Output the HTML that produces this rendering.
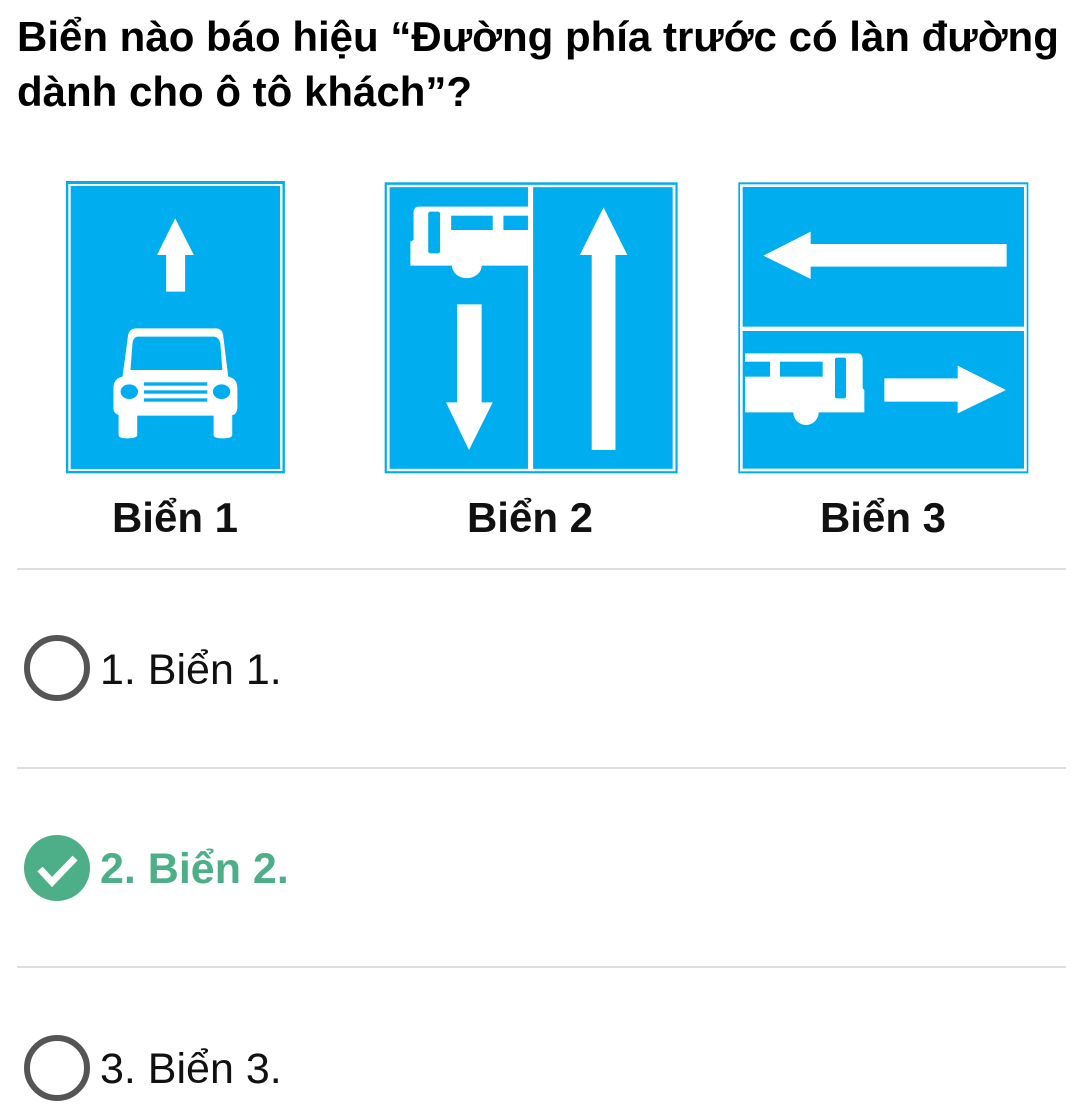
<!DOCTYPE html>
<html><head><meta charset="utf-8"><style>
body{margin:0;width:1079px;height:1110px;background:#fff;position:relative;overflow:hidden;font-family:"Liberation Sans",sans-serif;}
.t{position:absolute;left:17px;top:9px;font-weight:bold;font-size:42px;line-height:55px;color:#000;white-space:nowrap;letter-spacing:0px}
.lbl{position:absolute;top:494px;font-weight:bold;font-size:42px;width:240px;text-align:center;color:#111}
.sep{position:absolute;left:17px;width:1049px;height:2px;background:#dedede}
.opt{position:absolute;left:100px;font-size:43px;color:#111;white-space:nowrap}
svg{position:absolute}
</style></head><body>
<div class="t">Biển nào báo hiệu “Đường phía trước có làn đường<br>dành cho ô tô khách”?</div>

<svg style="left:60px;top:175px" width="620" height="300" viewBox="0 0 1566 900" preserveAspectRatio="none">
<rect x="15" y="18" width="553" height="877" fill="#00aeef"/>
<rect x="24" y="30" width="535" height="855" fill="none" stroke="#fff" stroke-width="6"/>
<polygon points="291,130 338,240 316,240 316,350 268,350 268,240 245,240" fill="#fff"/>
<path d="M190,460 H395 Q410,462 412,480 L425,605 Q448,610 448,640 V700 Q445,720 435,720 V780 Q435,790 410,790 Q388,790 388,780 V722 H195 V780 Q195,790 170,790 Q148,790 148,780 V720 Q135,715 135,700 V640 Q135,610 158,605 L172,480 Q175,462 190,460 Z" fill="#fff"/>
<path d="M195,485 H390 Q402,488 405,505 L410,585 H178 L183,505 Q185,488 195,485 Z" fill="#00aeef"/>
<circle cx="175" cy="650" r="22" fill="#00aeef"/><circle cx="408" cy="650" r="22" fill="#00aeef"/>
<rect x="212" y="622" width="160" height="10" fill="#00aeef"/>
<rect x="212" y="646" width="160" height="10" fill="#00aeef"/>
<rect x="212" y="670" width="160" height="10" fill="#00aeef"/>
<rect x="820" y="22" width="740" height="873" fill="#00aeef"/>
<rect x="829" y="33" width="722" height="852" fill="none" stroke="#fff" stroke-width="7"/>
<rect x="1182" y="35" width="13" height="848" fill="#fff"/>
<path d="M905,95 H1182 V272 H1065 A37,37 0 0 1 990,272 H885 V200 L893,195 V110 Q895,95 905,95 Z" fill="#fff"/>
<rect x="930" y="110" width="30" height="125" rx="6" fill="#00aeef"/>
<rect x="988" y="122" width="105" height="43" fill="#00aeef"/>
<rect x="1120" y="122" width="62" height="43" fill="#00aeef"/>
<polygon points="1003,388 1065,388 1065,682 1093,682 1033,825 975,682 1003,682" fill="#fff"/>
<polygon points="1373,97 1433,240 1403,240 1403,825 1343,825 1343,240 1313,240" fill="#fff"/>
</svg>

<svg style="left:730px;top:175px" width="300" height="300" viewBox="0 0 900 900" preserveAspectRatio="none">
<rect x="25" y="22" width="870" height="873" fill="#00aeef"/>
<rect x="34" y="32" width="852" height="853" fill="none" stroke="#fff" stroke-width="8"/>
<rect x="34" y="455" width="852" height="13" fill="#fff"/>
<polygon points="100,242 242,170 242,207 830,207 830,275 242,275 242,312" fill="#fff"/>
<path d="M45,535 H385 Q398,537 398,555 V640 L403,645 V712 H266 A38,38 0 0 1 190,712 H45 Z" fill="#fff"/>
<rect x="45" y="560" width="75" height="45" fill="#00aeef"/>
<rect x="150" y="560" width="128" height="45" fill="#00aeef"/>
<rect x="315" y="548" width="33" height="122" rx="6" fill="#00aeef"/>
<polygon points="463,610 683,610 683,572 828,645 683,715 683,680 463,680" fill="#fff"/>
</svg>

<div class="lbl" style="left:55px">Biển 1</div>
<div class="lbl" style="left:410px">Biển 2</div>
<div class="lbl" style="left:763px">Biển 3</div>

<div class="sep" style="top:568px"></div>
<div class="sep" style="top:767px"></div>
<div class="sep" style="top:966px"></div>

<svg style="left:20px;top:631px" width="76" height="76"><circle cx="37" cy="37" r="30" fill="none" stroke="#555" stroke-width="6"/></svg>
<div class="opt" style="top:646px">1. Biển 1.</div>

<svg style="left:20px;top:831px" width="76" height="76"><circle cx="37" cy="37" r="33" fill="#4caf87"/><path d="M20,38 L32,51 L55,27" fill="none" stroke="#fff" stroke-width="7"/></svg>
<div class="opt" style="top:845px;color:#4caf87;font-weight:bold">2. Biển 2.</div>

<svg style="left:20px;top:1031px" width="76" height="76"><circle cx="37" cy="37" r="30" fill="none" stroke="#555" stroke-width="6"/></svg>
<div class="opt" style="top:1045px">3. Biển 3.</div>
</body></html>
